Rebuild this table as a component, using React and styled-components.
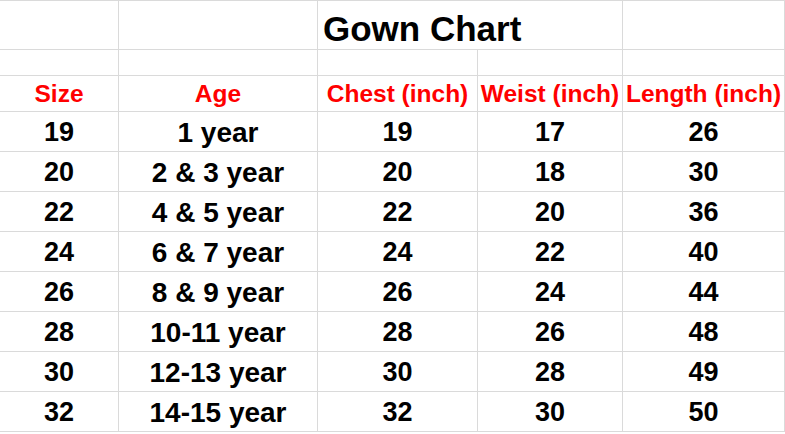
import React from "react";
import styled, { createGlobalStyle } from "styled-components";

const Global = createGlobalStyle`
  html, body { margin: 0; padding: 0; background: #fff; }
  body { font-family: "Liberation Sans", Arial, sans-serif; }
`;

const Sheet = styled.div`
  display: grid;
  grid-template-columns: 119px 199px 160px 145px 162px;
  grid-template-rows: 49px 26px 36px repeat(8, 40px);
  width: 785px;
  border-top: 1px solid #dadada;
  overflow: hidden;
  font-family: "Liberation Sans", Arial, sans-serif;
  font-weight: bold;
`;

const Cell = styled.div`
  display: flex;
  align-items: center;
  justify-content: center;
  border-right: 1px solid #dadada;
  border-bottom: 1px solid #dadada;
  white-space: nowrap;
  color: #000;
  font-size: ${(p) => (p.$wide ? "28px" : "27px")};
  line-height: 27px;
  padding-top: 1px;
  grid-column: ${(p) => p.$span || "auto"};
`;

const TitleCell = styled(Cell)`
  justify-content: flex-start;
  align-items: flex-end;
  padding: 0 0 3px 5px;
  font-size: 35px;
  line-height: 35px;
  color: #000;
`;

const HeadCell = styled(Cell)`
  color: #f00;
  font-size: 24.5px;
  line-height: 24px;
  padding-top: 0;
`;

const headers = ["Size", "Age", "Chest (inch)", "Weist (inch)", "Length (inch)"];

const rows = [
  ["19", "1 year", "19", "17", "26"],
  ["20", "2 & 3 year", "20", "18", "30"],
  ["22", "4 & 5 year", "22", "20", "36"],
  ["24", "6 & 7 year", "24", "22", "40"],
  ["26", "8 & 9 year", "26", "24", "44"],
  ["28", "10-11 year", "28", "26", "48"],
  ["30", "12-13 year", "30", "28", "49"],
  ["32", "14-15 year", "32", "30", "50"],
];

export default function App() {
  return (
    <>
      <Global />
      <Sheet>
        <Cell />
        <Cell />
        <TitleCell $span="span 2">Gown Chart</TitleCell>
        <Cell />
        {[0, 1, 2, 3, 4].map((i) => (
          <Cell key={"e" + i} />
        ))}
        {headers.map((h) => (
          <HeadCell key={h}>{h}</HeadCell>
        ))}
        {rows.map((r, ri) =>
          r.map((v, ci) => (
            <Cell key={ri + "-" + ci} $wide={ci === 1}>
              {v}
            </Cell>
          ))
        )}
      </Sheet>
    </>
  );
}
